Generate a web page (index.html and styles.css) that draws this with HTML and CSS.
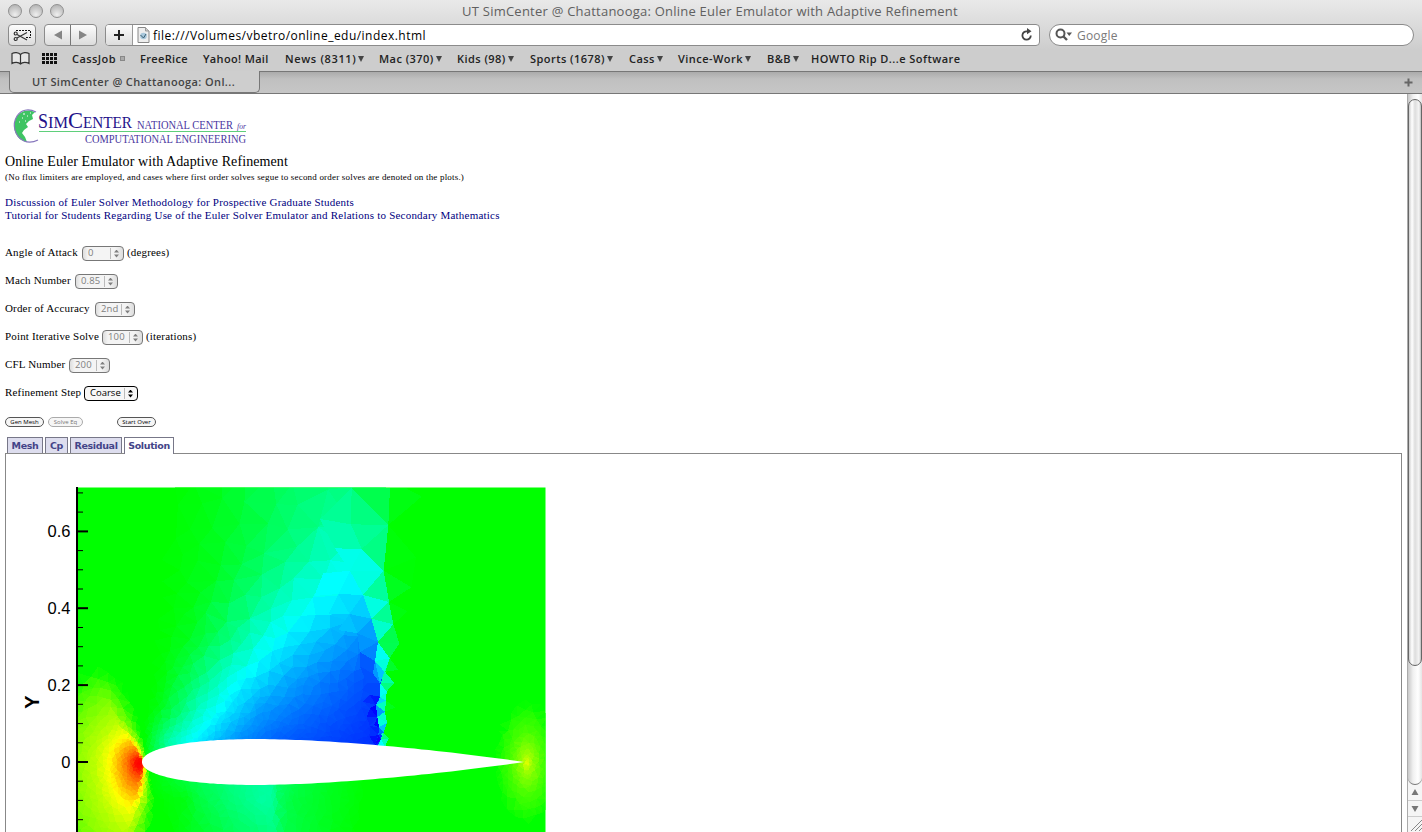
FILE: index.html
```html
<!DOCTYPE html>
<html lang="en">
<head>
<meta charset="utf-8">
<title>UT SimCenter @ Chattanooga: Online Euler Emulator with Adaptive Refinement</title>
<link rel="stylesheet" href="styles.css">
</head>
<body>
<header class="chrome">
  <div class="titlebar">
    <div class="lights"><i></i><i></i><i></i></div>
    <div class="window-title">UT SimCenter @ Chattanooga: Online Euler Emulator with Adaptive Refinement</div>
  </div>
  <div class="toolbar">
    <div class="btn clip">
      <svg width="20" height="16" viewBox="0 0 20 16"><path d="M3 2.500H17.500V9.500H12" fill="none" stroke="#111" stroke-dasharray="2 1"/><g fill="none" stroke="#333" stroke-width="1.200"><circle cx="2.700" cy="5.500" r="1.500"/><circle cx="2.700" cy="11" r="1.500"/><path d="M4 6.500L14 12M4 10L14 4.500"/></g></svg>
    </div>
    <div class="btn nav"><svg width="51" height="20" viewBox="0 0 51 20"><path d="M17 5.500V14.500L9 10ZM34 5.500V14.500L42 10Z" fill="#858585"/><path d="M25.500 0V20" stroke="#777"/></svg></div>
    <div class="address">
      <div class="plus"><svg width="26" height="20" viewBox="0 0 26 20"><path d="M13 5V15M8 10H18" stroke="#222" stroke-width="2"/></svg></div>
      <svg class="doc" width="13" height="16" viewBox="0 0 13 16"><path d="M1 .5H8.500L12 4V15.500H1Z" fill="#eee" stroke="#888"/><path d="M8.500 .5V4H12" fill="#ccc" stroke="#999"/><circle cx="6.500" cy="9" r="3.300" fill="#a9c8dc"/><path d="M3.500 8L6.500 11L9 7" stroke="#395d70" fill="none"/></svg>
      <span class="url">file:///Volumes/vbetro/online_edu/index.html</span>
      <svg class="reload" width="12" height="14" viewBox="0 0 12 14"><path d="M9.800 7.500A4.200 4.200 0 1 1 6 3.300H7.500" fill="none" stroke="#444" stroke-width="1.800"/><path d="M6 0L10.500 3.200L6 6.300Z" fill="#444"/></svg>
    </div>
    <div class="search">
      <svg width="19" height="14" viewBox="0 0 19 14"><circle cx="5.500" cy="5.500" r="4" fill="none" stroke="#555" stroke-width="2"/><path d="M8.500 8.500L12 12" stroke="#555" stroke-width="2.400"/><path d="M11.500 4.500H17L14.250 8Z" fill="#555"/></svg>
      <span>Google</span>
    </div>
  </div>
  <nav class="bookmarks">
    <svg class="book" width="19" height="13" viewBox="0 0 19 13"><path d="M9.500 2.500C7.500 .2 3.500 .2 1 1.500V11.500C3.500 10 7.500 10 9.500 12C11.500 10 15.500 10 18 11.500V1.500C15.500 .2 11.500 .2 9.500 2.500V11.500" fill="#e6e6e6" stroke="#333" stroke-width="1.200"/></svg>
    <svg class="grid" width="16" height="12" viewBox="0 0 16 12"><path d="M0 1.500H16M0 5.500H16M0 9.500H16" stroke="#111" stroke-width="3" stroke-dasharray="3 1"/></svg>
    <span class="bm b1">CassJob<b class="sq"></b></span><span class="bm b2">FreeRice</span><span class="bm b3">Yahoo! Mail</span><span class="bm b4">News (8311)<b></b></span><span class="bm b5">Mac (370)<b></b></span><span class="bm b6">Kids (98)<b></b></span><span class="bm b7">Sports (1678)<b></b></span><span class="bm b8">Cass<b></b></span><span class="bm b9">Vince-Work<b></b></span><span class="bm b10">B&amp;B<b></b></span><span class="bm b11">HOWTO Rip D...e Software</span>
  </nav>
  <div class="tabstrip">
    <div class="page-tab"><span>UT SimCenter @ Chattanooga: Onl...</span></div>
    <svg class="newtab" width="9" height="9" viewBox="0 0 9 9"><path d="M4.500 .5V8.500M.5 4.500H8.500" stroke="#666" stroke-width="2"/></svg>
  </div>
</header>
<div class="viewport">
  <main class="page">
    <svg class="logo" width="250" height="60" viewBox="5 94 250 60">
      <path d="M35 112C27 108 19 112 16 118C13 125 14 132 18 137C20 140 23 141 27 142L25 137L22 133L24 130L28 127L26 124L29 121L33 119L32 115Z" fill="#3fc463"/>
      <path d="M36 112C28 108 21 110 17 116C12 124 14 136 24 141C29 143 34 142 38 140" fill="none" stroke="#8878bd" stroke-width="1.200"/>
      <path d="M23 114h2M27 116h1M22 118h1M30 113h1M19 122h1M25 121h1" stroke="#fff"/>
      <g fill="#24128a" font-family="'Liberation Serif'">
        <text x="38" y="128" font-size="22" textLength="10" lengthAdjust="spacingAndGlyphs">S</text>
        <text x="48" y="128" font-size="17" textLength="20" lengthAdjust="spacingAndGlyphs">IM</text>
        <text x="68" y="128" font-size="24" textLength="15" lengthAdjust="spacingAndGlyphs">C</text>
        <text x="83" y="128" font-size="17" textLength="49" lengthAdjust="spacingAndGlyphs">ENTER</text>
        <g fill="#4936a0"><text x="137" y="129" font-size="12" textLength="96" lengthAdjust="spacingAndGlyphs">NATIONAL CENTER</text>
        <text x="237" y="129" font-size="9" font-style="italic" textLength="9" lengthAdjust="spacingAndGlyphs">for</text>
        <text x="85" y="142.500" font-size="12" textLength="161" lengthAdjust="spacingAndGlyphs">COMPUTATIONAL ENGINEERING</text></g>
      </g>
      <path d="M39 131.500H246" stroke="#5fcf7b"/>
    </svg>
    <h1>Online Euler Emulator with Adaptive Refinement</h1>
    <p class="note">(No flux limiters are employed, and cases where first order solves segue to second order solves are denoted on the plots.)</p>
    <div class="links"><a class="l1">Discussion of Euler Solver Methodology for Prospective Graduate Students</a><a class="l2">Tutorial for Students Regarding Use of the Euler Solver Emulator and Relations to Secondary Mathematics</a></div>
    <div class="form">
      <div class="row"><label class="w77">Angle of Attack</label><span class="sel s42">0</span><span class="unit">(degrees)</span></div>
      <div class="row"><label class="w70">Mach Number</label><span class="sel s43">0.85</span></div>
      <div class="row"><label class="w90">Order of Accuracy</label><span class="sel s40">2nd</span></div>
      <div class="row"><label class="w97">Point Iterative Solve</label><span class="sel s41">100</span><span class="unit">(iterations)</span></div>
      <div class="row"><label class="w64">CFL Number</label><span class="sel s41">200</span></div>
      <div class="row"><label class="w79">Refinement Step</label><span class="sel s54 on">Coarse</span></div>
    </div>
    <div class="buttons"><span class="push p1">Gen Mesh</span><span class="push p2">Solve Eq</span><span class="push p3">Start Over</span></div>
    <div class="tabs"><span class="t1">Mesh</span><span class="t2">Cp</span><span class="t3">Residual</span><span class="t4 active">Solution</span></div>
    <div class="panel">
      <svg class="plot" width="560" height="378" viewBox="6 454 560 378">
        <defs><clipPath id="area"><path d="M77 487.500H545.500V832H77Z"/></clipPath></defs>
        <g clip-path="url(#area)">
          <path d="M77 487H546V832H77Z" fill="#0f0"/>
          <g id="mesh" shape-rendering="crispEdges"></g>
          <g id="shock" shape-rendering="crispEdges" transform="translate(270 470) scale(.33333)"></g>
          <path id="foil" fill="#fff"/>
        </g>
        <g id="axis" stroke="#000"></g>
        <g class="axis-text"><text x="70.500" y="537">0.6</text><text x="70.500" y="614">0.4</text><text x="70.500" y="691">0.2</text><text x="70.500" y="768">0</text></g>
        <text class="axis-name" transform="translate(38.500 702) rotate(-90)">Y</text>
      </svg>
    </div>
  </main>
  <aside class="scroll">
    <div class="trough"><div class="thumb"></div></div>
    <svg width="14" height="47" viewBox="0 0 14 47"><path d="M0 15.500H14M0 31.500H14" stroke="#ccc"/><path d="M7 4L10.500 10H3.500ZM7 27L10.500 21H3.500Z" fill="#777"/><path d="M3 46L14 35M7 46L14 39M11 46L14 43" stroke="#888"/></svg>
  </aside>
</div>
<script src="plot.js"></script>
</body>
</html>
```
FILE: styles.css
```css
* { box-sizing: border-box; }
body { margin: 0; width: 1422px; height: 832px; overflow: hidden; display: flex; flex-direction: column; background: #fff; }
.chrome { height: 94px; flex: none; font-family: "Open Sans", "Noto Sans", sans-serif; background: linear-gradient(#e9e9e9, #cdcdcd 50px, #cdcdcd); border-bottom: 1px solid #777; }
.titlebar { height: 24px; display: flex; }
.lights { display: flex; gap: 7px; padding: 4px 0 0 8px; width: 250px; }
.lights i { width: 14px; height: 14px; border-radius: 50%; border: 1px solid #909090; background: radial-gradient(circle at 50% 80%, #eee, #b8b8b8 80%); }
.window-title { width: 920px; text-align: center; font-size: 13px; line-height: 23px; color: #606060; letter-spacing: .23px; white-space: nowrap; }
.toolbar { display: flex; height: 22px; padding-left: 8px; }
.btn { height: 22px; border: 1px solid #8b8b8b; border-radius: 4px; background: linear-gradient(#fcfcfc, #dcdcdc); overflow: hidden; }
.clip { width: 28px; padding: 2px 0 0 4px; }
.nav { width: 53px; margin: 0 8px; }
.address { width: 935px; border: 1px solid #8b8b8b; border-radius: 4px; display: flex; align-items: center; background: #fff; overflow: hidden; }
.plus { width: 27px; height: 20px; border-right: 1px solid #999; background: linear-gradient(#fcfcfc, #dcdcdc); }
.doc { margin-left: 4px; }
.url { margin-left: 3px; flex: 1; font-size: 12px; color: #000; letter-spacing: .47px; white-space: nowrap; }
.reload { margin-right: 6px; }
.search { margin-left: 9px; width: 365px; border: 1px solid #8b8b8b; border-radius: 11px; background: #fff; display: flex; align-items: center; padding-left: 5px; gap: 3px; font-size: 12px; letter-spacing: .2px; color: #7b7b7b; }
.bookmarks { height: 25px; display: flex; align-items: center; padding-left: 11px; }
.book { margin-right: 12px; }
.grid { margin-right: 14px; }
.bm { font-size: 11px; font-weight: 600; color: #222; white-space: nowrap; letter-spacing: .45px; display: flex; align-items: center; }
.bm b { border: 3.5px solid transparent; border-top: 6px solid #444; border-bottom: 0; margin-left: 2px; }
.bm .sq { border: 1px solid #888; width: 5px; height: 5px; margin-left: 4px; background: #aaa; }
.b1 { width: 68px; } .b2 { width: 63px; } .b3 { width: 82px; } .b4 { width: 94px; } .b5 { width: 78px; } .b6 { width: 73px; } .b7 { width: 99px; } .b8 { width: 49px; } .b9 { width: 89px; } .b10 { width: 44px; }
.b2, .b3 { letter-spacing: .35px; }
.b4 { letter-spacing: .65px; }
.tabstrip { height: 22px; border-top: 1px solid #777; background: linear-gradient(#ababab, #c0c0c0 7px, #c6c6c6); display: flex; padding: 0 9px; justify-content: space-between; align-items: center; }
.page-tab { width: 251px; height: 22px; margin-top: -1px; background: #cecece; border: 1px solid #777; border-top: 0; border-radius: 0 0 5px 5px; padding-left: 22px; font-size: 11px; font-weight: 600; line-height: 21px; color: #444; letter-spacing: .38px; white-space: nowrap; }
.viewport { display: flex; height: 738px; }
.page { width: 1407px; padding-left: 5px; font-family: "Liberation Serif", serif; font-size: 11px; color: #000; }
.logo { display: block; overflow: visible; }
h1 { font-size: 14px; font-weight: 400; line-height: 16px; margin: 0; white-space: nowrap; letter-spacing: .09px; }
.note { font-size: 9px; line-height: 14px; height: 26px; margin: 0; white-space: nowrap; letter-spacing: .19px; }
.links { display: flex; flex-direction: column; height: 43px; line-height: 13px; color: #000080; white-space: nowrap; letter-spacing: .215px; }
.row { height: 28px; display: flex; align-items: center; white-space: nowrap; letter-spacing: .17px; }
label { flex: none; }
label, .unit { padding-bottom: 2px; }
.w77 { width: 77px; } .w70 { width: 70px; } .w90 { width: 90px; } .w97 { width: 97px; } .w64 { width: 64px; } .w79 { width: 79px; }
.sel { height: 15px; border: 1px solid #777; border-radius: 4px; background: linear-gradient(90deg, #ddd, #f4f4f4 5px, #f4f4f4 80%, #ddd); font: 9.500px/12px "Open Sans", sans-serif; padding-left: 5px; color: #808080; position: relative; }
.sel::before { content: ""; position: absolute; right: 12px; top: 1px; height: 11px; border-left: 1px solid #bbb; }
.sel::after { content: ""; position: absolute; right: 4px; top: 3px; width: 5px; height: 8px; background: currentColor; clip-path: polygon(50% 0, 100% 38%, 0 38%, 0 62%, 100% 62%, 50% 100%, 0 62%, 0 38%); }
.s42 { width: 42px; } .s43 { width: 43px; } .s40 { width: 40px; } .s41 { width: 41px; } .s54 { width: 54px; }
.on { border-color: #000; color: #000; background: #f7f7f7; letter-spacing: 0; }
.unit { margin-left: 3px; }
.buttons { display: flex; height: 30px; align-items: center; font-family: "Open Sans", sans-serif; }
.push { height: 10px; border: 1px solid #555; border-radius: 5px; font-size: 6px; line-height: 8px; text-align: center; background: #f6f6f6; white-space: nowrap; }
.p1 { width: 39px; } .p2 { width: 35px; margin-left: 4px; color: #777; border-color: #aaa; } .p3 { width: 39px; margin-left: 34px; }
.tabs { display: flex; gap: 2px; padding-left: 2px; height: 16px; font: bold 9.500px/16px "DejaVu Sans", sans-serif; letter-spacing: -.35px; color: #448; }
.tabs span { border: 1px solid #778; border-bottom: 0; background: #dde; text-align: center; height: 16px; white-space: nowrap; }
.tabs .active { background: #fff; height: 17px; position: relative; }
.t1 { width: 36px; } .t2 { width: 23px; } .t3 { width: 52px; } .t4 { width: 50px; }
.panel { width: 1397px; height: 379px; border: 1px solid #888; border-bottom: 0; }
.plot { display: block; }
.axis-text { font: 16.500px "Liberation Sans", sans-serif; text-anchor: end; }
.axis-name { font: bold 20px "Liberation Sans", sans-serif; text-anchor: middle; }
.scroll { width: 15px; border-left: 1px solid #aaa; background: #f5f5f5; }
.trough { height: 691px; padding-top: 5px; border-radius: 0 0 7px 7px; border-bottom: 1px solid #777; background: linear-gradient(90deg, #c8c8c8, #f0f0f0 5px, #fff 10px, #e5e5e5); }
.thumb { height: 567px; border: 1.500px solid #666; border-radius: 7px; background: linear-gradient(90deg, #ccc, #fff 3px, #ddd 6px, #f5f5f5 10px, #bbb); }
.scroll svg { display: block; }
```
FILE: plot.js
```js
// Pressure field around a NACA 0012 section, drawn as flat shaded triangles.
// Field values are stored directly as hues: 0 red, 60 yellow, 120 green, 180 cyan, 240 blue.
let seed = 7;
const rnd = () => { seed = (seed * 1664525 + 1013904223) % 4294967296; return seed / 4294967296; };
const lerp = (t, x) => {
  if (x <= t[0][0]) return t[0][1];
  for (let i = 1; i < t.length; i++) if (x <= t[i][0]) {
    const a = t[i - 1], b = t[i];
    return a[1] + (b[1] - a[1]) * (x - a[0]) / (b[0] - a[0] || 1);
  }
  return t[t.length - 1][1];
};
const half = x => {
  const c = (x - 142) / 382;
  if (c <= 0 || c >= 1) return 0;
  return 382 * 0.6 * (0.2969 * Math.sqrt(c) - 0.126 * c - 0.3516 * c * c + 0.2843 * c ** 3 - 0.1036 * c ** 4);
};
const upper = [
  [488, [[173,120],[185,121],[215,126],[245,133],[290,144],[330,148],[352,150],[375,138]]],
  [535, [[163,120],[200,124],[230,130],[260,138],[300,150],[320,158],[350,162],[365,154]]],
  [570, [[163,120],[210,126],[250,140],[275,150],[300,161],[330,172],[350,178],[370,170]]],
  [605, [[162,120],[190,124],[230,140],[260,156],[290,171],[320,181],[340,187],[360,193]]],
  [640, [[160,120],[185,126],[210,139],[240,157],[265,175],[285,183],[310,192],[340,201],[360,207],[375,212]]],
  [680, [[155,120],[165,124],[190,142],[215,162],[235,178],[260,189],[290,201],[330,212],[372,222]]],
  [710, [[149,120],[160,126],[180,146],[200,167],[225,184],[260,203],[300,213],[340,220],[372,226]]],
  [740, [[145,120],[155,138],[170,160],[190,178],[210,191],[240,207],[280,218],[340,225],[378,229]]]
];
const lower = [
  [780, [[150,120],[170,128],[200,140],[240,153],[270,158],[280,142],[330,127],[365,120]]],
  [800, [[158,120],[185,124],[200,135],[230,147],[262,158],[272,157],[280,142],[295,134],[330,127],[365,120]]],
  [832, [[170,120],[200,130],[240,143],[274,151],[285,137],[330,126],[360,120]]]
];
const rows = (t, x, y) => lerp(t.map(r => [r[0], lerp(r[1], x)]), y);
const back = [[488,390],[525,388],[571,384],[602,388],[624,394],[643,399],[658,389],[692,386],[745,385]];
const front = [[488,352],[548,362],[595,363],[620,371],[642,378],[662,373],[684,379],[706,376],[745,380]];
function hue(x, y) {
  const edge = lerp([[665,102],[685,122],[712,135],[745,144],[762,147],[800,154],[815,153],[832,150]], y);
  if (x < edge && y > 665) {
    const dy = (y - 763) * (y > 763 ? 0.65 : 0.97);
    const h = lerp([[0,0],[4,3],[8,17],[14,31],[20,42],[28,57],[34,65],[44,76],[60,86],[75,95],[92,108],[102,120]], Math.hypot(x - 139, dy));
    const fade = 4 + Math.min(18, Math.abs(y - 763) * 0.4);
    return 120 + (h - 120) * Math.min(1, (edge - x) / fade);
  }
  if (x > 450) return lerp([[0,66],[4,82],[8,90],[16,103],[25,112],[31,120]], Math.hypot(x - 527, (y - 763) / 1.95));
  if (y > 762) return rows(lower, x, y);
  if (x > lerp(back, y)) return 120;
  return y > 600 && x > lerp(front, y) + 1 ? 165 : rows(upper, x, y);
}
// Graded point cloud: fine next to the surface, coarse in the far field.
const pts = [];
const far = (x, y) => {
  const cx = Math.max(150, Math.min(523, x));
  return Math.hypot(x - cx, Math.max(0, Math.abs(y - 762) - half(cx)));
};
const scatter = (count, x0, y0, w, hgt) => {
  for (let i = 0; i < count; i++) {
    const x = x0 + rnd() * w, y = y0 + rnd() * hgt;
    if (Math.abs(y - 762) < half(x) - 4) continue;
    if (x > 395 && (y < 690 || x < 480)) continue;
    const nose = Math.hypot(x - 140, y - 763), tail = Math.hypot(x - 525, y - 763);
    const h = Math.min(3.6 + far(x, y) * 0.08, 1.6 + nose * 0.065, 2 + tail * 0.085);
    if (pts.every(p => (p[0] - x) ** 2 + (p[1] - y) ** 2 > h * h)) pts.push([x, y]);
  }
};
scatter(9000, 95, 715, 70, 100);
scatter(45000, 55, 450, 510, 405);
const circ = (a, b, c) => {
  const [ax, ay] = pts[a], [bx, by] = pts[b], [cx, cy] = pts[c];
  const d = 2 * (ax * (by - cy) + bx * (cy - ay) + cx * (ay - by));
  const A = ax * ax + ay * ay, B = bx * bx + by * by, C = cx * cx + cy * cy;
  const x = (A * (by - cy) + B * (cy - ay) + C * (ay - by)) / d;
  const y = (A * (cx - bx) + B * (ax - cx) + C * (bx - ax)) / d;
  return { v: [a, b, c], x, y, r: (ax - x) ** 2 + (ay - y) ** 2 };
};
pts.sort((a, b) => a[0] - b[0]);
const n = pts.length;
pts.push([-9000, -8000], [9000, -8100], [300, 15000]);
let open = [circ(n, n + 1, n + 2)];
const done = [];
for (let i = 0; i < n; i++) {
  const [x, y] = pts[i], edges = new Map(), keep = [];
  for (const t of open) {
    const dx = x - t.x;
    if (dx > 0 && dx * dx > t.r) { done.push(t); continue; }
    if (dx * dx + (y - t.y) ** 2 < t.r) {
      const [a, b, c] = t.v;
      for (const [p, q] of [[a, b], [b, c], [c, a]]) {
        const k = Math.min(p, q) + "_" + Math.max(p, q);
        if (edges.has(k)) edges.delete(k); else edges.set(k, [p, q]);
      }
    } else keep.push(t);
  }
  for (const [p, q] of edges.values()) keep.push(circ(p, q, i));
  open = keep;
}
const color = h => `hsl(${h.toFixed(1)},100%,50%)`;
const poly = (p, h) => `<path d="M${p.map(v => v.map(c => +c.toFixed(1)).join(" ")).join("L")}Z" fill="${color(h)}"/>`;
let out = "";
for (const t of done.concat(open)) {
  if (t.v.some(i => i >= n)) continue;
  const p = t.v.map(i => pts[i]);
  const x = (p[0][0] + p[1][0] + p[2][0]) / 3, y = (p[0][1] + p[1][1] + p[2][1]) / 3;
  const h = hue(x, y);
  if (Math.abs(h - 120) > 0.7) out += poly(p, h + (rnd() - 0.5) * Math.min(1, Math.abs(h - 120) / 8));
}
document.getElementById("mesh").innerHTML = out;
// Cells along the shock, where the mesh follows the discontinuity.
const cells = [
  [120,360,53,355,165,341,302,357,396,370,463,388,520,359,565,346,605,373,638,350,665,348,692,345,725,351,758,341,788,356,806,345,830,480,850,480,53],
  [138,245,53,360,53,355,165],[150,245,53,243,163,355,165],[155,245,53,243,163,150,147],[155,243,163,355,165,275,237],[161,243,163,150,147,195,235,275,237],
  [151,355,165,275,237,341,302],[174,275,237,240,302,341,302],[175,195,235,275,237,240,302],[173,240,302,341,302,279,375],[182,240,302,279,375,205,372],[180,240,302,205,372,133,378,160,310],
  [157,341,302,279,375,357,396],[188,205,372,279,375,238,432],[191,279,375,238,432,304,446],[186,205,372,238,432,175,432],[173,279,375,357,396,304,446],[155,357,396,304,446,370,463],
  [197,238,432,304,446,262,490],[194,238,432,205,480,262,490],[202,304,446,262,490,324,516],[168,304,446,370,463,324,516],[138,370,463,388,520,324,516],[139,324,516,388,520,359,565],
  [205,262,490,324,516,270,546],[209,270,546,324,516,315,573],[177,324,516,359,565,315,573],[219,270,546,315,573,309,610,270,590],[130,359,565,385,600,346,605],[172,315,573,359,565,343,605],
  [194,315,573,343,605,330,640],[204,315,573,309,610,330,640],[221,270,590,309,610,330,640,290,640],[160,343,605,373,638,332,640],[150,373,638,332,640,350,665],
  [223,290,640,330,640,330,680,300,672,275,660],[178,330,640,350,665,331,682],[172,331,682,350,665,348,692],[190,331,682,348,692,318,705],[165,348,692,318,705,345,725],
  [204,318,705,345,725,322,742],[168,345,725,322,742,351,758],[172,322,742,351,758,327,772],[195,351,758,341,788,327,772],[215,327,772,341,788,325,795],
  [150,341,788,356,806,333,808],[165,333,808,356,806,345,828],[243,325,795,333,808,315,828],[180,333,808,345,832,322,832],
  [234,300,675,330,680,318,705],[230,300,675,318,705,279,695],[226,279,695,318,705,300,715],[239,318,705,322,742,300,715],[235,300,715,322,742,290,742],[229,290,742,322,742,300,768],[238,322,742,327,772,312,765],[232,300,768,327,772,325,795],[229,300,768,325,795,298,800],[236,325,795,315,825,298,800],
  [124,360,53,405,53,455,80,355,165],[122,355,165,438,262,341,302],[121,341,302,438,262,424,352],[127,341,302,424,352,357,396],[123,357,396,412,424,370,463],[126,348,692,376,712,345,725]
];
document.getElementById("shock").innerHTML = cells.map(([h, ...c]) => {
  const p = [];
  for (let i = 0; i < c.length; i += 2) p.push([c[i], c[i + 1]]);
  return poly(p, h);
}).join("");
const top_ = [], bot = [];
for (let s = 0; s <= 90; s++) {
  const x = 142 + 382 * (s / 90) ** 2, h = half(x);
  top_.push(`${x.toFixed(1)} ${(762 - h).toFixed(1)}`);
  bot.unshift(`${x.toFixed(1)} ${(762 + h).toFixed(1)}`);
}
document.getElementById("foil").setAttribute("d", "M" + top_.concat(bot).join("L") + "Z");
// Vertical axis with ticks every 0.05, long ones every 0.2.
let ticks = '<path d="M77 487V832" stroke-width="2"/>';
for (let i = -3; i <= 14; i++) {
  const y = 762 - i * 19.22, major = i % 4 === 0;
  ticks += `<path d="M77 ${y.toFixed(1)}H${major ? 88 : 83}" stroke-width="${major ? 2 : 1}"/>`;
}
document.getElementById("axis").innerHTML = ticks;
```
